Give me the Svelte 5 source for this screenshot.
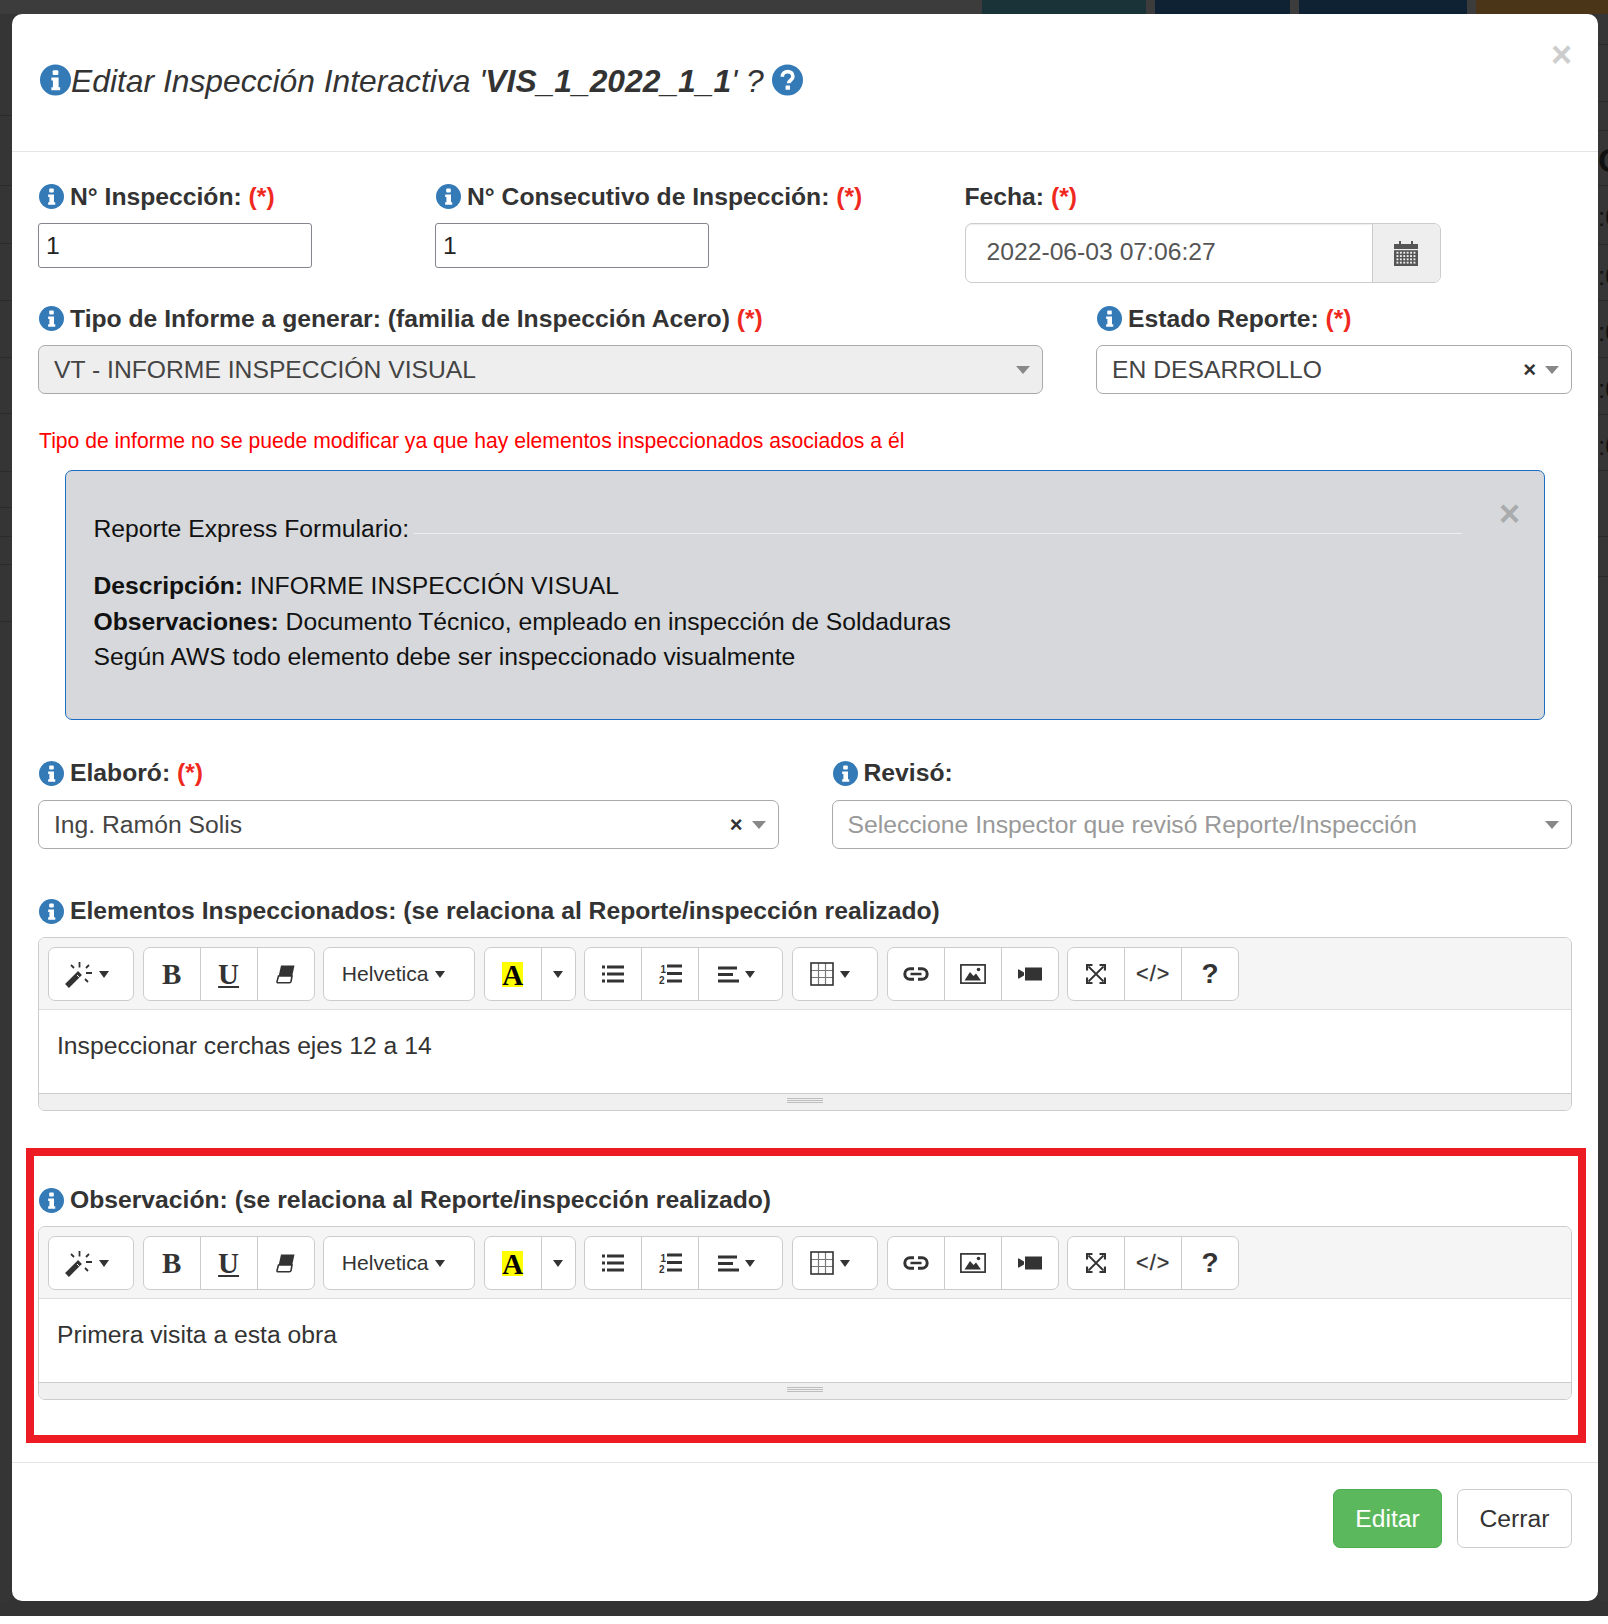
<script>
	const leftRows = [102, 70, 58, 57, 57, 56, 58, 36, 29, 28, 57, 994];
	const rightRows = [31, 57, 29, 55, 59, 56, 57, 57, 56, 66, 40];
	const calendarDots = [];
	for (let y = 0; y < 4; y++) for (let x = 0; x < 6; x++) calendarDots.push({ x: 2.5 + x * 3.4, y: 10.8 + y * 3.3 });
</script>

{#snippet info()}
	<svg class="info" viewBox="0 0 24 24">
		<circle cx="12" cy="12" r="12" fill="#337ab7" />
		<rect x="9.8" y="4.4" width="4.4" height="3.8" rx="0.8" fill="#fff" />
		<path d="M8.8 10h5.6v7.6h1.2v2.4H8.8v-2.4h1.2v-5.2H8.8z" fill="#fff" />
	</svg>
{/snippet}

{#snippet req()}
	<span class="req">(*)</span>
{/snippet}

{#snippet caret()}
	<i class="caret"></i>
{/snippet}

{#snippet toolbar()}
	<div class="toolbar">
		<div class="group">
			<span class="btn w86 drop">
				<svg width="28" height="27" viewBox="0 0 28 27">
					<path d="M2 25 15 12" stroke="#333" stroke-width="5.4" fill="none" />
					<path d="M12 14l2.5 2.5" stroke="#fff" stroke-width="1" />
					<path d="M14.500 1v5.500M6 4l3 3M24 4l-3 3M21 12h6M20 18l3 3" stroke="#333" stroke-width="1.8" fill="none" />
				</svg>
				{@render caret()}
			</span>
		</div>
		<div class="group">
			<span class="btn"><b class="serif">B</b></span>
			<span class="btn"><b class="serif under">U</b></span>
			<span class="btn">
				<svg width="20" height="20" viewBox="0 0 20 20">
					<path d="M5 1.5h13.5L16 13H2.5z" fill="#333" />
					<path d="M2.5 12 1 17.6a1 1 0 0 0 1 1.2h11.4a1.6 1.6 0 0 0 1.6-1.2L16 12z" fill="#fff" stroke="#333" stroke-width="1.6" />
				</svg>
			</span>
		</div>
		<div class="group">
			<span class="btn w150 font drop">Helvetica {@render caret()}</span>
		</div>
		<div class="group">
			<span class="btn"><span class="hilite">A</span></span>
			<span class="btn w35">{@render caret()}</span>
		</div>
		<div class="group">
			<span class="btn">
				<svg width="22" height="18" viewBox="0 0 22 18" fill="#333">
					<rect x="0" y="0.5" width="3" height="3" /><rect x="5" y="0.5" width="17" height="3" />
					<rect x="0" y="7.5" width="3" height="3" /><rect x="5" y="7.5" width="17" height="3" />
					<rect x="0" y="14.5" width="3" height="3" /><rect x="5" y="14.5" width="17" height="3" />
				</svg>
			</span>
			<span class="btn">
				<svg width="23" height="20" viewBox="0 0 23 20" fill="#333">
					<text x="1.5" y="9" class="ol">1</text><text x="0" y="19.5" class="ol">2</text>
					<rect x="8" y="0.5" width="15" height="3" /><rect x="8" y="8" width="15" height="3" /><rect x="8" y="15.5" width="15" height="3" />
				</svg>
			</span>
			<span class="btn w85 drop">
				<svg width="21" height="17" viewBox="0 0 21 17" fill="#333">
					<rect width="19" height="3" y="0.5" /><rect width="15" height="3" y="7" /><rect width="21" height="3" y="13.5" />
				</svg>
				{@render caret()}
			</span>
		</div>
		<div class="group">
			<span class="btn w85 drop">
				<svg width="24" height="24" viewBox="0 0 24 24" fill="none">
					<path d="M8.5 1v22M15.5 1v22M1 8.5h22M1 15.5h22" stroke="#777" stroke-width="1.2" />
					<rect x="1" y="1" width="22" height="22" stroke="#333" stroke-width="1.6" />
				</svg>
				{@render caret()}
			</span>
		</div>
		<div class="group">
			<span class="btn">
				<svg width="26" height="14" viewBox="0 0 26 14" fill="none" stroke="#333">
					<path d="M11 1.8H7a5.2 5.2 0 0 0 0 10.4h4M15 1.8h4a5.2 5.2 0 0 1 0 10.4h-4" stroke-width="3" />
					<path d="M7.5 7h11" stroke-width="2.6" />
				</svg>
			</span>
			<span class="btn">
				<svg width="26" height="20" viewBox="0 0 26 20">
					<rect x="0.9" y="0.9" width="24.2" height="18.2" fill="none" stroke="#333" stroke-width="1.7" />
					<path d="M4.5 16.5 10 8l3.5 4 2.5-2.5 5 7z" fill="#333" />
					<circle cx="18.5" cy="5.5" r="1.8" fill="#333" />
				</svg>
			</span>
			<span class="btn">
				<svg width="24" height="14" viewBox="0 0 24 14" fill="#333">
					<rect x="7" y="0.5" width="17" height="13" />
					<path d="M0 2.5h1l5 3v3l-5 3H0z" />
				</svg>
			</span>
		</div>
		<div class="group">
			<span class="btn">
				<svg width="20" height="20" viewBox="0 0 20 20" fill="none" stroke="#333">
					<path d="M2.500 2.500l15 15M17.500 2.500l-15 15" stroke-width="1.800" />
					<path d="M6.500 1H1v5.500M13.500 1H19v5.500M6.500 19H1v-5.500M13.500 19H19v-5.500" stroke-width="2.200" />
				</svg>
			</span>
			<span class="btn code">&lt;/&gt;</span>
			<span class="btn help">?</span>
		</div>
	</div>
{/snippet}

{#snippet editor(text)}
	<div class="editor">
		{@render toolbar()}
		<div class="editable">{text}</div>
		<div class="statusbar"><i></i><i></i><i></i></div>
	</div>
{/snippet}

{#snippet select(text, disabled, clear, placeholder)}
	<div class="select" class:disabled>
		<span class="value" class:placeholder>{text}</span>
		{#if clear}<b class="clear">×</b>{/if}
		<i class="arrow"></i>
	</div>
{/snippet}

<div class="page">
	<div class="topstrip">
		<span class="tb teal"></span>
		<span class="tb navy a"></span>
		<span class="tb navy b"></span>
		<span class="tb brown"></span>
	</div>
	<div class="middle">
		<div class="side left">
			{#each leftRows as h}
				<div class="siderow" style="height: {h}px"></div>
			{/each}
		</div>

		<div class="modal">
			<header class="modal-header">
				<h4>
					<svg class="info big" viewBox="0 0 24 24">
						<circle cx="12" cy="12" r="12" fill="#337ab7" />
						<rect x="9.8" y="4.4" width="4.4" height="3.8" rx="0.8" fill="#fff" />
						<path d="M8.8 10h5.6v7.6h1.2v2.4H8.8v-2.4h1.2v-5.2H8.8z" fill="#fff" />
					</svg>
					<span class="title">Editar Inspección Interactiva '<b>VIS_1_2022_1_1</b>' ?</span>
					<svg class="info big help-ico" viewBox="0 0 24 24">
						<circle cx="12" cy="12" r="12" fill="#337ab7" />
						<path d="M8 9.4c0-5.2 8.2-5.2 8.2-.2 0 3.200-3.300 2.800-3.300 5.400" fill="none" stroke="#fff" stroke-width="2.800" />
						<rect x="10.500" y="16.200" width="3.400" height="3.400" rx="0.500" fill="#fff" />
					</svg>
				</h4>
				<span class="close">×</span>
			</header>

			<div class="modal-body">
				<div class="row one">
					<div>
						<div class="lbl">{@render info()} <span>N° Inspección: {@render req()}</span></div>
						<input class="plain" value="1" readonly />
					</div>
					<div>
						<div class="lbl">{@render info()} <span>N° Consecutivo de Inspección: {@render req()}</span></div>
						<input class="plain" value="1" readonly />
					</div>
					<div>
						<div class="lbl"><span>Fecha: {@render req()}</span></div>
						<div class="date">
							<span class="date-val">2022-06-03 07:06:27</span>
							<span class="addon">
								<svg width="24" height="25" viewBox="0 0 24 25">
									<path d="M0 3h5V0h2v3h10V0h2v3h5v5H0z" fill="#555" />
									<rect y="9.200" width="24" height="15.800" fill="#555" />
									{#each calendarDots as d}
										<rect x={d.x} y={d.y} width="1.900" height="1.900" fill="#eee" />
									{/each}
								</svg>
							</span>
						</div>
					</div>
				</div>

				<div class="row two">
					<div>
						<div class="lbl">{@render info()} <span>Tipo de Informe a generar: (familia de Inspección Acero) {@render req()}</span></div>
						{@render select('VT - INFORME INSPECCIÓN VISUAL', true, false, false)}
					</div>
					<div>
						<div class="lbl">{@render info()} <span>Estado Reporte: {@render req()}</span></div>
						{@render select('EN DESARROLLO', false, true, false)}
					</div>
				</div>

				<p class="warn">Tipo de informe no se puede modificar ya que hay elementos inspeccionados asociados a él</p>

				<div class="alert">
					<span class="close small">×</span>
					<div class="alert-head"><span>Reporte Express Formulario:</span><i></i></div>
					<div><b>Descripción:</b> INFORME INSPECCIÓN VISUAL</div>
					<div><b>Observaciones:</b> Documento Técnico, empleado en inspección de Soldaduras</div>
					<div>Según AWS todo elemento debe ser inspeccionado visualmente</div>
				</div>

				<div class="row three">
					<div>
						<div class="lbl">{@render info()} <span>Elaboró: {@render req()}</span></div>
						{@render select('Ing. Ramón Solis', false, true, false)}
					</div>
					<div>
						<div class="lbl">{@render info()} <span>Revisó:</span></div>
						{@render select('Seleccione Inspector que revisó Reporte/Inspección', false, false, true)}
					</div>
				</div>

				<div class="block first">
					<div class="lbl">{@render info()} <span>Elementos Inspeccionados: (se relaciona al Reporte/inspección realizado)</span></div>
					{@render editor('Inspeccionar cerchas ejes 12 a 14')}
				</div>

				<div class="block second">
					<div class="lbl">{@render info()} <span>Observación: (se relaciona al Reporte/inspección realizado)</span></div>
					{@render editor('Primera visita a esta obra')}
					<div class="redmark"></div>
				</div>
			</div>

			<footer class="modal-footer">
				<span class="foot-btn green">Editar</span>
				<span class="foot-btn">Cerrar</span>
			</footer>
		</div>

		<div class="side right">
			{#each rightRows as h, i}
				<div class="siderow" style="height: {h}px">
					{#if i === 3}<b class="bg-c">C</b>{/if}
					{#if i >= 4 && i <= 8}<b class="bg-t">:0</b>{/if}
				</div>
			{/each}
		</div>
	</div>
</div>

<style>
	:global(body) {
		margin: 0;
		background: #fff;
	}
	.page {
		width: 1608px;
		height: 1616px;
		overflow: hidden;
		background: #333;
		font-family: 'Liberation Sans', Arial, sans-serif;
		font-size: 24.7px;
		line-height: 34px;
		color: #333;
	}
	.topstrip {
		display: flex;
		height: 14px;
		padding-left: 982px;
		background: #3c3c3c;
	}
	.tb {
		display: block;
		height: 14px;
		margin-right: 9px;
	}
	.teal {
		width: 164px;
		background: #1a3338;
	}
	.navy {
		background: #0e2234;
	}
	.navy.a {
		width: 135px;
	}
	.navy.b {
		width: 169px;
	}
	.brown {
		width: 132px;
		margin-right: 0;
		background: #4a3518;
	}
	.middle {
		display: flex;
		height: 1587px;
	}
	.side {
		overflow: hidden;
		background: #353535;
	}
	.side.left {
		width: 12px;
		flex: none;
	}
	.side.right {
		width: 10px;
		flex: none;
		background: #363636;
	}
	.siderow {
		overflow: hidden;
		box-sizing: border-box;
		border-bottom: 1px solid #2b2b2b;
		color: #111;
		line-height: 1;
	}
	.bg-c {
		display: block;
		font-size: 34px;
		padding-top: 12px;
	}
	.bg-t {
		display: block;
		font-weight: 400;
		font-size: 26px;
		padding-top: 18px;
		white-space: nowrap;
	}
	.modal {
		width: 1586px;
		flex: none;
		display: flex;
		flex-direction: column;
		background: #fff;
		border-radius: 10px;
		height: 1587px;
	}
	.modal-header {
		position: relative;
		box-sizing: border-box;
		height: 138px;
		padding: 48px 26px 0 27px;
		border-bottom: 1px solid #e5e5e5;
	}
	h4 {
		display: flex;
		align-items: center;
		margin: 0;
		font-weight: 400;
		font-size: 31.8px;
		line-height: 32px;
	}
	.title {
		padding-top: 3px;
		font-style: italic;
		white-space: nowrap;
	}
	.close {
		position: absolute;
		top: 20px;
		right: 26px;
		font-weight: 700;
		font-size: 36px;
		line-height: 42px;
		color: #cdcdcd;
	}
	.close.small {
		top: 22px;
		right: 24px;
		color: #a9abad;
	}
	.info {
		width: 25px;
		height: 25px;
		flex: none;
		margin-left: 1px;
	}
	.info.big {
		width: 31px;
		height: 32px;
	}
	.help-ico {
		margin-left: 8px;
	}
	.modal-body {
		flex: 1;
		padding: 27px 26px 0;
	}
	.lbl {
		display: flex;
		align-items: center;
		gap: 6px;
		height: 34px;
		margin-bottom: 10px;
		font-weight: 700;
		white-space: nowrap;
	}
	.one .lbl span,
	.two .lbl span {
		padding-top: 2px;
	}
	.req {
		color: #f0291f;
	}
	.row {
		display: grid;
	}
	.one {
		grid-template-columns: 397px 529.5px 1fr;
		height: 104px;
	}
	.two {
		grid-template-columns: 1fr 476px;
		column-gap: 53.5px;
		margin-top: 18px;
	}
	.three {
		grid-template-columns: 1fr 1fr;
		column-gap: 53px;
		margin-top: 36px;
	}
	.plain {
		display: block;
		box-sizing: border-box;
		width: 274px;
		height: 45px;
		padding: 0 7px;
		border: 1px solid #85858f;
		border-radius: 3px;
		outline: none;
		background: #fff;
		color: #222;
		font: 24.7px 'Liberation Sans', Arial, sans-serif;
	}
	.date {
		display: flex;
		box-sizing: border-box;
		width: 476px;
		height: 60px;
		border: 1px solid #ccc;
		border-radius: 7px;
		overflow: hidden;
		box-shadow: inset 0 1px 1px rgba(0, 0, 0, 0.075);
	}
	.date-val {
		flex: 1;
		padding: 0 21px;
		line-height: 56px;
		color: #555;
	}
	.addon {
		display: flex;
		align-items: center;
		justify-content: center;
		width: 67px;
		background: #eee;
		border-left: 1px solid #ccc;
	}
	.select {
		display: flex;
		align-items: center;
		box-sizing: border-box;
		height: 49px;
		padding: 0 12px 0 15px;
		border: 1px solid #aaa;
		border-radius: 7px;
		background: #fff;
		color: #444;
	}
	.select.disabled {
		background: #eee;
	}
	.value {
		flex: 1;
		white-space: nowrap;
	}
	.placeholder {
		color: #999;
	}
	.clear {
		margin-right: 9px;
		font-size: 22px;
		color: #333;
	}
	.arrow {
		width: 0;
		height: 0;
		border-style: solid;
		border-width: 8px 7px 0;
		border-color: #888 transparent transparent;
	}
	.warn {
		margin: 32px 0 14px 1px;
		font-size: 21.15px;
		line-height: 30px;
		color: #f00;
	}
	.alert {
		position: relative;
		box-sizing: border-box;
		height: 250px;
		margin: 0 27px 0 26.5px;
		padding: 40px 27px 0 28px;
		border: 1.5px solid #1b6ec2;
		border-radius: 7px;
		background: #d6d8db;
		color: #111;
		line-height: 35.8px;
	}
	.alert-head {
		display: flex;
		margin-bottom: 21px;
		margin-right: 55px;
	}
	.alert-head span {
		white-space: nowrap;
	}
	.alert-head i {
		flex: 1;
		height: 1px;
		margin: 22px 0 0 5px;
		background: #eee;
	}
	.block.first {
		margin-top: 45px;
	}
	.block.second {
		position: relative;
		margin-top: 72px;
	}
	.block .lbl {
		margin-bottom: 9px;
	}
	.redmark {
		position: absolute;
		top: -35px;
		left: -12px;
		right: -14px;
		height: 295px;
		box-sizing: border-box;
		border: 8px solid #ed1c24;
		pointer-events: none;
	}
	.editor {
		box-sizing: border-box;
		height: 174px;
		border: 1px solid #ccc;
		border-radius: 7px;
		overflow: hidden;
	}
	.toolbar {
		display: flex;
		gap: 8.6px;
		box-sizing: border-box;
		height: 72px;
		padding: 9px 0 0 9px;
		background: #f5f5f5;
		border-bottom: 1px solid #ddd;
	}
	.group {
		display: flex;
		height: 54px;
		box-sizing: border-box;
		border: 1px solid #ccc;
		border-radius: 7px;
		background: #fff;
	}
	.btn {
		display: flex;
		align-items: center;
		justify-content: center;
		gap: 5px;
		box-sizing: border-box;
		width: 57px;
		height: 52px;
		border-left: 1px solid #ccc;
	}
	.btn:first-child {
		border-left: 0;
		width: 56px;
	}
	.btn.drop {
		padding-right: 9px;
		gap: 6px;
	}
	.btn.w86:first-child {
		width: 84px;
	}
	.btn.w150:first-child {
		width: 150px;
	}
	.btn.w85,
	.btn.w85:first-child {
		width: 84px;
	}
	.btn.w35 {
		width: 34px;
	}
	.btn.font {
		font-size: 21.1px;
		padding-right: 12px;
	}
	.serif {
		font-family: 'Liberation Serif', 'Times New Roman', serif;
		font-size: 29px;
		line-height: 1;
	}
	.under {
		text-decoration: underline;
		text-decoration-thickness: 2px;
		text-underline-offset: 2px;
	}
	.hilite {
		display: block;
		width: 21px;
		height: 25px;
		background: #ff0;
		color: #000;
		font: 700 29px/27px 'Liberation Serif', 'Times New Roman', serif;
		text-align: center;
	}
	.caret {
		width: 0;
		height: 0;
		border-style: solid;
		border-width: 7px 5.5px 0;
		border-color: #333 transparent transparent;
	}
	.ol {
		font: 700 10px 'Liberation Sans', Arial, sans-serif;
	}
	.code {
		font-size: 21.5px;
		letter-spacing: 1px;
		-webkit-text-stroke: 0.3px #333;
	}
	.help {
		font-size: 28px;
		font-weight: 700;
	}
	.editable {
		box-sizing: border-box;
		height: 84px;
		padding: 19px 18px 0;
		background: #fff;
		border-bottom: 1px solid #ccc;
	}
	.statusbar {
		display: flex;
		flex-direction: column;
		align-items: center;
		gap: 1px;
		height: 16px;
		padding-top: 4px;
		box-sizing: border-box;
		background: #f0f0f0;
	}
	.statusbar i {
		display: block;
		width: 36px;
		height: 1px;
		background: #bdbdbd;
	}
	.modal-footer {
		display: flex;
		justify-content: flex-end;
		gap: 15px;
		box-sizing: border-box;
		height: 139px;
		padding: 26px 26px 0;
		border-top: 1px solid #e5e5e5;
	}
	.foot-btn {
		box-sizing: border-box;
		width: 115px;
		height: 59px;
		border: 1px solid #ccc;
		border-radius: 7px;
		background: #fff;
		line-height: 57px;
		text-align: center;
	}
	.foot-btn.green {
		width: 109px;
		border-color: #4cae4c;
		background: #5cb85c;
		color: #fff;
	}
</style>
